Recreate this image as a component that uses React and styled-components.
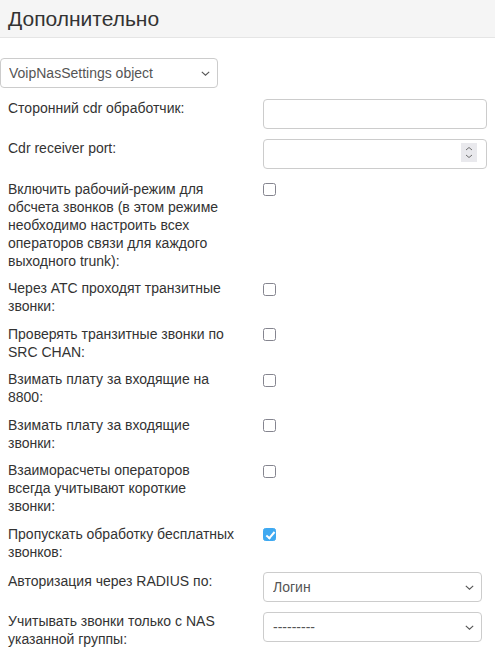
import React from 'react';
import styled, { createGlobalStyle } from 'styled-components';

const GlobalStyle = createGlobalStyle`
    body {
        margin: 0;
        background: #fff;
        font-family: "Liberation Sans", Arial, sans-serif;
        font-size: 14px;
        color: #333;
    }
`;

const Header = styled.div`
    height: 37px;
    background: #f5f5f5;
    border-bottom: 1px solid #e5e5e5;
    display: flex;
    align-items: center;
    padding: 0 8px;
`;

const Title = styled.h3`
    margin: 0;
    font-size: 21px;
    font-weight: 400;
    color: #333;
`;

const Body = styled.div`
    padding: 20px 8px 0 0;
`;

const SelectWrap = styled.div`
    position: relative;
    width: ${p => p.$width}px;
    margin-bottom: ${p => p.$mb || 0}px;
`;

const Select = styled.select`
    appearance: none;
    display: block;
    box-sizing: border-box;
    width: 100%;
    height: 30px;
    padding: 0 24px 0 ${p => p.$pl || 8}px;
    border: 1px solid #ccc;
    border-radius: 4px;
    background: #fff;
    color: #555;
    font-family: inherit;
    font-size: 14px;
`;

const Chevron = styled.svg`
    position: absolute;
    right: 8px;
    top: 13px;
    pointer-events: none;
`;

const Row = styled.div`
    display: grid;
    grid-template-columns: 227px 224px;
    column-gap: 28px;
    align-items: start;
    padding-left: 8px;
    margin-bottom: ${p => p.$gap || 10}px;
`;

const Label = styled.label`
    line-height: 18px;
    color: #333;
`;

const InputWrap = styled.div`
    position: relative;
    width: 224px;
`;

const TextInput = styled.input`
    box-sizing: border-box;
    display: block;
    width: 100%;
    height: 30px;
    padding: 0 8px;
    border: 1px solid #ccc;
    border-radius: 4px;
    font-family: inherit;
    font-size: 14px;
    color: #555;

    &::-webkit-inner-spin-button,
    &::-webkit-outer-spin-button {
        -webkit-appearance: none;
        margin: 0;
    }
`;

const Spinner = styled.svg`
    position: absolute;
    right: 10px;
    top: 4px;
    pointer-events: none;
`;

const Check = styled.input.attrs({ type: 'checkbox' })`
    appearance: none;
    position: relative;
    box-sizing: border-box;
    width: 13px;
    height: 13px;
    margin: 3.5px 0 0 0;
    border: 1px solid #85858f;
    border-radius: 2.5px;
    background: #fff;

    &:checked {
        background: #3fa9f1;
        border-color: #3fa9f1;
    }

    &:checked::after {
        content: "";
        position: absolute;
        left: 3.5px;
        top: 0.5px;
        width: 3px;
        height: 7px;
        border: solid #fff;
        border-width: 0 2px 2px 0;
        transform: rotate(40deg);
    }
`;

const ChevronDown = () => (
    <Chevron width="9" height="5" viewBox="0 0 9 5">
        <path d="M0.8 0.8 L4.5 4.2 L8.2 0.8" fill="none" stroke="#555" strokeWidth="1.1" />
    </Chevron>
);

const checks = [
    ['Включить рабочий-режим для обсчета звонков (в этом режиме необходимо настроить всех операторов связи для каждого выходного trunk):', false],
    ['Через АТС проходят транзитные звонки:', false],
    ['Проверять транзитные звонки по SRC CHAN:', false],
    ['Взимать плату за входящие на 8800:', false],
    ['Взимать плату за входящие звонки:', false],
    ['Взаиморасчеты операторов всегда учитывают короткие звонки:', false],
    ['Пропускать обработку бесплатных звонков:', true],
];

const App = () => {
    return (
        <>
            <GlobalStyle />
            <Header>
                <Title>Дополнительно</Title>
            </Header>
            <Body>
                <SelectWrap $width={218} $mb={11}>
                    <Select defaultValue="obj">
                        <option value="obj">VoipNasSettings object</option>
                    </Select>
                    <ChevronDown />
                </SelectWrap>
                <Row>
                    <Label>Сторонний cdr обработчик:</Label>
                    <InputWrap>
                        <TextInput type="text" />
                    </InputWrap>
                </Row>
                <Row $gap={10.5}>
                    <Label>Cdr receiver port:</Label>
                    <InputWrap>
                        <TextInput type="number" />
                        <Spinner width="16" height="19" viewBox="0 0 16 19">
                            <rect width="16" height="19" fill="#e9e9ed" />
                            <path d="M5 7 L8 4.5 L11 7" fill="none" stroke="#6d6d6d" strokeWidth="1" />
                            <path d="M5 12 L8 14.5 L11 12" fill="none" stroke="#6d6d6d" strokeWidth="1" />
                        </Spinner>
                    </InputWrap>
                </Row>
                {checks.map(([text, on], i) => (
                    <Row key={text} $gap={i === checks.length - 1 ? 11.5 : 9.5}>
                        <Label>{text}</Label>
                        <Check defaultChecked={on} />
                    </Row>
                ))}
                <Row>
                    <Label>Авторизация через RADIUS по:</Label>
                    <SelectWrap $width={219}>
                        <Select defaultValue="login" $pl={9}>
                            <option value="login">Логин</option>
                        </Select>
                        <ChevronDown />
                    </SelectWrap>
                </Row>
                <Row>
                    <Label>Учитывать звонки только с NAS указанной группы:</Label>
                    <SelectWrap $width={219}>
                        <Select defaultValue="" $pl={9}>
                            <option value="">---------</option>
                        </Select>
                        <ChevronDown />
                    </SelectWrap>
                </Row>
            </Body>
        </>
    );
};

export default App;
